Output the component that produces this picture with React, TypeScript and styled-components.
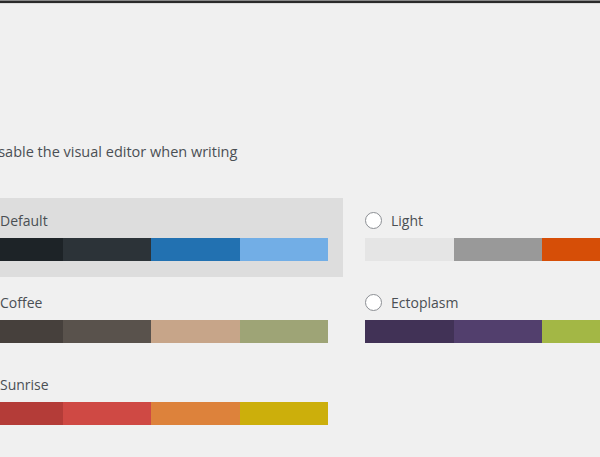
import React from 'react';
import styled, { createGlobalStyle } from 'styled-components';

const GlobalStyle = createGlobalStyle`
  html, body {
    margin: 0;
    padding: 0;
    background: #f0f0f0;
    overflow: hidden;
  }
  body {
    font-family: 'Open Sans', 'Liberation Sans', sans-serif;
    font-size: 14px;
    color: #4a4f54;
  }
`;

const App = () => {
  return (
    <>
      <GlobalStyle />
      <TopRule />
      <Page>
        <EditorRow>
          <Checkbox />
          <EditorLabel>Disable the visual editor when writing</EditorLabel>
        </EditorRow>
        <SchemeGrid>
          {SCHEMES.map(scheme => (
            <SchemeOption key={scheme.id} selected={scheme.selected}>
              <SchemeLabel>
                <Radio checked={scheme.selected} />
                <span>{scheme.name}</span>
              </SchemeLabel>
              <Palette>
                {scheme.colors.map(color => (
                  <Swatch key={color} color={color} />
                ))}
              </Palette>
            </SchemeOption>
          ))}
        </SchemeGrid>
      </Page>
    </>
  );
};

const TopRule = styled.div`
  height: 0;
  border-top: 1px solid #8a8a8a;
  border-bottom: 2px solid #2b2b2b;
  box-shadow: 0 1px 0 #dcdcdc;
`;

const Page = styled.div`
  margin-left: -41px;
  padding-top: 139px;
`;

const EditorRow = styled.label`
  display: flex;
  align-items: center;
  gap: 8px;
  height: 20px;
  margin-left: 1px;
`;

const Checkbox = styled.span`
  width: 16px;
  height: 16px;
  border: 1px solid #8c8f94;
  border-radius: 2px;
  background: #fff;
  box-sizing: border-box;
`;

const EditorLabel = styled.span`
  font-size: 14.5px;
  line-height: 20px;
`;

const SchemeGrid = styled.div`
  display: grid;
  grid-template-columns: 384px 384px;
  column-gap: 7px;
  row-gap: 3px;
  margin-top: 36px;
`;

const SchemeOption = styled.div<{ selected?: boolean }>`
  padding: 5px 15px 16px;
  background: ${p => (p.selected ? '#dddddd' : 'transparent')};
`;

const SchemeLabel = styled.label`
  display: flex;
  align-items: center;
  gap: 9px;
  height: 35px;
  line-height: 20px;
`;

const Radio = styled.span<{ checked?: boolean }>`
  width: 17px;
  height: 17px;
  flex: none;
  box-sizing: border-box;
  border: 1px solid #8c8f94;
  border-radius: 50%;
  background: ${p =>
    p.checked ? 'radial-gradient(circle, #2271b1 0 3px, #fff 4px)' : '#fff'};
`;

const Palette = styled.div`
  display: flex;
  height: 23px;
`;

const Swatch = styled.div<{ color: string }>`
  flex: 1;
  background: ${p => p.color};
`;

const SCHEMES = [
  {
    id: 0,
    name: 'Default',
    selected: true,
    colors: ['#1d2327', '#2c3338', '#2271b1', '#72aee6'],
  },
  {
    id: 1,
    name: 'Light',
    colors: ['#e5e5e5', '#999999', '#d64e07', '#04a4cc'],
  },
  {
    id: 2,
    name: 'Coffee',
    colors: ['#46403c', '#59524c', '#c7a589', '#9ea476'],
  },
  {
    id: 3,
    name: 'Ectoplasm',
    colors: ['#413256', '#523f6d', '#a3b745', '#d46f15'],
  },
  {
    id: 4,
    name: 'Sunrise',
    colors: ['#b43c38', '#cf4944', '#dd823b', '#ccaf0b'],
  },
];

export default App;
